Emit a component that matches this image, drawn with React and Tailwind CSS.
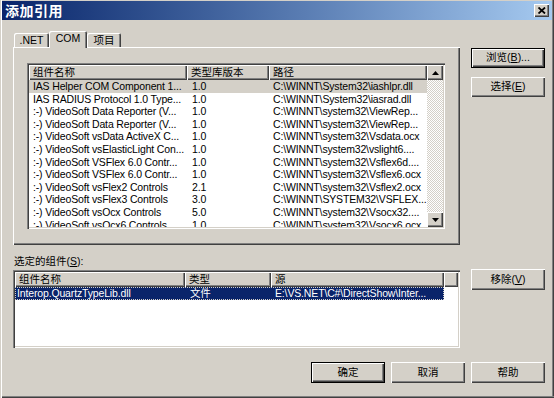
import React from "react";

const RAISED = "shadow-[inset_1px_1px_0_#ffffff,inset_-1px_-1px_0_#404040,inset_-2px_-2px_0_#808080]";
const SUNKEN = "shadow-[inset_1px_1px_0_#808080,inset_2px_2px_0_#404040,inset_-1px_-1px_0_#ffffff,inset_-2px_-2px_0_#d4d0c8]";

const rows = [
  ["IAS Helper COM Component 1...", "1.0", "C:\\WINNT\\System32\\iashlpr.dll"],
  ["IAS RADIUS Protocol 1.0 Type...", "1.0", "C:\\WINNT\\System32\\iasrad.dll"],
  [":-) VideoSoft Data Reporter (V...", "1.0", "C:\\WINNT\\system32\\ViewRep..."],
  [":-) VideoSoft Data Reporter (V...", "1.0", "C:\\WINNT\\system32\\ViewRep..."],
  [":-) VideoSoft vsData ActiveX C...", "1.0", "C:\\WINNT\\system32\\Vsdata.ocx"],
  [":-) VideoSoft vsElasticLight Con...", "1.0", "C:\\WINNT\\system32\\vslight6...."],
  [":-) VideoSoft VSFlex 6.0 Contr...", "1.0", "C:\\WINNT\\system32\\Vsflex6d...."],
  [":-) VideoSoft VSFlex 6.0 Contr...", "1.0", "C:\\WINNT\\system32\\Vsflex6.ocx"],
  [":-) VideoSoft vsFlex2 Controls", "2.1", "C:\\WINNT\\system32\\Vsflex2.ocx"],
  [":-) VideoSoft vsFlex3 Controls", "3.0", "C:\\WINNT\\SYSTEM32\\VSFLEX..."],
  [":-) VideoSoft vsOcx Controls", "5.0", "C:\\WINNT\\system32\\Vsocx32...."],
  [":-) VideoSoft vsOcx6 Controls", "1.0", "C:\\WINNT\\system32\\Vsocx6.ocx"],
];

function Btn({ children, def, className = "" }) {
  return (
    <div
      className={`w-[74px] flex items-center justify-center bg-[#d4d0c8] ${
        def ? "border border-black" : ""
      } ${RAISED} ${className}`}
    >
      {children}
    </div>
  );
}

function Arrow({ up }) {
  return (
    <svg width="7" height="4" viewBox="0 0 7 4">
      {up ? <polygon points="3.5,0 7,4 0,4" fill="#000" /> : <polygon points="0,0 7,0 3.5,4" fill="#000" />}
    </svg>
  );
}

export default function App() {
  return (
    <div className="w-[554px] h-[398px] bg-[#d4d0c8] overflow-hidden text-[10.5px] text-black font-['Liberation_Sans','Noto_Sans_CJK_SC',sans-serif] shadow-[inset_1px_0_0_#d4d0c8,inset_2px_0_0_#ffffff,inset_0_-1px_0_#404040,inset_0_-2px_0_#808080,inset_-1px_0_0_#404040,inset_-2px_0_0_#808080]">
      {/* title bar */}
      <div className="h-[20px] mx-[2px] pt-px">
        <div className="h-[19px] bg-linear-to-r from-[#0a246a] to-[#a6caf0] flex items-center justify-between pl-[3px] pr-[3px]">
          <span className="text-white font-bold text-[14px] leading-[19px] tracking-[0.5px] font-['Noto_Sans_CJK_SC',sans-serif]">添加引用</span>
          <div className={`w-[15px] h-[13px] bg-[#d4d0c8] flex items-center justify-center ${RAISED}`}>
            <svg width="8" height="7" viewBox="0 0 8 7">
              <path d="M0.5 0.5 L7 6.5 M7 0.5 L0.5 6.5" stroke="#000" strokeWidth="1.8" />
            </svg>
          </div>
        </div>
      </div>

      {/* body */}
      <div className="flex pl-[13px] pt-[11px]">
        {/* left column */}
        <div className="w-[447px] flex flex-col">
          {/* tabs */}
          <div className="h-[16px] flex items-end pl-px">
            <div className="w-[35px] h-[14px] rounded-t-[2px] shadow-[inset_1px_1px_0_#ffffff,inset_-1px_0_0_#404040,inset_-2px_0_0_#808080] text-center leading-[14px]">.NET</div>
            <div className="relative z-10 w-[38px] h-[17px] -mb-px rounded-t-[2px] bg-[#d4d0c8] shadow-[inset_1px_1px_0_#ffffff,inset_-1px_0_0_#404040,inset_-2px_0_0_#808080] text-center leading-[15px]">COM</div>
            <div className="w-[34px] h-[14px] rounded-t-[2px] shadow-[inset_1px_1px_0_#ffffff,inset_-1px_0_0_#404040,inset_-2px_0_0_#808080] text-center leading-[14px]">项目</div>
          </div>
          {/* panel */}
          <div className={`h-[198px] pt-[16px] pl-[14px] pr-[15px] ${RAISED}`}>
            <div className={`h-[166px] p-[2px] bg-white ${SUNKEN}`}>
              <div className="h-full flex overflow-hidden">
                <div className="flex-1 flex flex-col overflow-hidden">
                  <div className="h-[15px] flex shrink-0">
                    <div className={`w-[158px] shrink-0 bg-[#d4d0c8] pl-[4px] leading-[15px] ${RAISED}`}>组件名称</div>
                    <div className={`w-[82px] shrink-0 bg-[#d4d0c8] pl-[4px] leading-[15px] ${RAISED}`}>类型库版本</div>
                    <div className={`flex-1 bg-[#d4d0c8] pl-[4px] leading-[15px] ${RAISED}`}>路径</div>
                  </div>
                  {rows.map((r, i) => (
                    <div key={i} className={`h-[12.6px] shrink-0 flex leading-[12.6px] whitespace-nowrap tracking-[-0.15px] ${i === 0 ? "bg-[#d4d0c8]" : ""}`}>
                      <div className="w-[158px] shrink-0 pl-[4px] overflow-hidden">{r[0]}</div>
                      <div className="w-[82px] shrink-0 pl-[5px]">{r[1]}</div>
                      <div className="flex-1 pl-[4px] overflow-hidden">{r[2]}</div>
                    </div>
                  ))}
                </div>
                {/* scrollbar */}
                <div className="w-[16px] shrink-0 flex flex-col bg-[repeating-conic-gradient(#ffffff_0%_25%,#d4d0c8_0%_50%)] bg-[length:2px_2px]">
                  <div className={`h-[15px] shrink-0 bg-[#d4d0c8] flex items-center justify-center ${RAISED}`}><Arrow up /></div>
                  <div className="flex-1" />
                  <div className={`h-[15px] shrink-0 bg-[#d4d0c8] flex items-center justify-center ${RAISED}`}><Arrow /></div>
                </div>
              </div>
            </div>
          </div>
          {/* label */}
          <div className="mt-[10px] h-[13px] leading-[13px] pl-px">
            选定的组件(<span className="underline">S</span>):
          </div>
          {/* selected list */}
          <div className={`mt-[2px] h-[78px] p-[2px] bg-white ${SUNKEN}`}>
            <div className="h-[15px] flex">
              <div className={`w-[170px] shrink-0 bg-[#d4d0c8] pl-[4px] leading-[15px] ${RAISED}`}>组件名称</div>
              <div className={`w-[86px] shrink-0 bg-[#d4d0c8] pl-[4px] leading-[15px] ${RAISED}`}>类型</div>
              <div className={`w-[173px] shrink-0 bg-[#d4d0c8] pl-[4px] leading-[15px] ${RAISED}`}>源</div>
              <div className={`flex-1 bg-[#d4d0c8] ${RAISED}`} />
            </div>
            <div className="w-[429px] h-[13px] flex leading-[13px] bg-[#0a246a] text-white whitespace-nowrap tracking-[-0.15px] outline outline-1 outline-dotted outline-[#d4d0c8] -outline-offset-1">
              <div className="w-[170px] shrink-0 pl-[2px]">Interop.QuartzTypeLib.dll</div>
              <div className="w-[86px] shrink-0 pl-[5px]">文件</div>
              <div className="flex-1 pl-[4px] overflow-hidden">E:\VS.NET\C#\DirectShow\Inter...</div>
            </div>
          </div>
        </div>

        {/* right column */}
        <div className="ml-[11px] flex flex-col">
          <Btn def className="mt-[17px] h-[20px]">
            浏览(<span className="underline">B</span>)...
          </Btn>
          <Btn className="mt-[9px] h-[20px]">
            选择(<span className="underline">E</span>)
          </Btn>
          <Btn className="mt-[172px] h-[21px]">
            移除(<span className="underline">V</span>)
          </Btn>
        </div>
      </div>

      {/* bottom buttons */}
      <div className="mt-[14px] flex justify-end gap-[6px] pr-[9px]">
        <Btn def className="h-[21px]">确定</Btn>
        <Btn className="h-[21px]">取消</Btn>
        <Btn className="h-[21px]">帮助</Btn>
      </div>
    </div>
  );
}
